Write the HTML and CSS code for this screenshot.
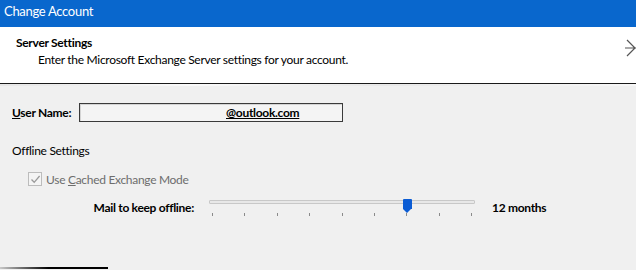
FILE: index.html
```html
<!doctype html>
<html>
<head>
  <link rel="stylesheet" href="styles.css">
</head>
<body>
  <div class="titlebar">Change Account</div>
  <div class="header">
    <div class="header-title">Server Settings</div>
    <div class="header-sub">Enter the Microsoft Exchange Server settings for your account.</div>
    <svg class="next-icon" width="12" height="20" viewBox="0 0 12 20">
      <path d="M3 2 L11 10 L3 18 M1 10 H12" fill="none" stroke="#555" stroke-width="1.2"/>
    </svg>
  </div>
  <div class="header-shadow"></div>
  <div class="content">
    <div class="user-row">
      <span class="label-bold user-label"><u>U</u>ser Name:</span>
      <div class="textbox"><span class="domain">@outlook.com</span></div>
    </div>
    <div class="section-title">Offline Settings</div>
    <div class="check-row">
      <span class="checkbox">
        <svg width="11" height="11" viewBox="0 0 11 11">
          <path d="M1.5 5.5 L4.2 8.3 L9.6 2" fill="none" stroke="#9a9a9a" stroke-width="1.3"/>
        </svg>
      </span>
      <span class="disabled-text">Use <u>C</u>ached Exchange Mode</span>
    </div>
    <div class="slider-row">
      <span class="label-bold slider-label">Mail to keep offline:</span>
      <div class="slider">
        <div class="track"></div>
        <div class="thumb"></div>
        <div class="ticks">
          <i></i><i></i><i></i><i></i><i></i><i></i><i></i><i></i><i></i>
        </div>
      </div>
      <span class="label-bold months">12 months</span>
    </div>
  </div>
  <div class="bottom-line"></div>
</body>
</html>
```

FILE: styles.css
```css
body {
  margin: 0;
  width: 636px;
  height: 270px;
  overflow: hidden;
  position: relative;
  background-color: #f0f0f0;
  font-family: Lato, "Open Sans", sans-serif;
  font-size: 12px;
  letter-spacing: -0.3px;
  color: #000;
}
.titlebar {
  height: 27px;
  background-color: #0967cd;
  color: #fff;
  font-size: 13px;
  line-height: 23px;
  padding-left: 4px;
}
.header {
  position: relative;
  height: 56px;
  background-color: #fff;
  border-bottom: 1px solid #1a1a1a;
}
.header-title {
  font-weight: bold;
  padding: 8px 0 0 16px;
  line-height: 16px;
}
.header-sub {
  padding: 1px 0 0 38px;
  line-height: 16px;
}
.next-icon {
  position: absolute;
  right: 0;
  top: 11px;
}
.header-shadow {
  height: 2px;
  background: linear-gradient(to right, #e6e6e6, #fafafa 30%, #e8e8e8 60%, #f7f7f7);
}
.content {
  padding: 17px 0 0 12px;
}
.label-bold {
  font-weight: bold;
}
.user-row {
  display: flex;
  align-items: center;
  height: 19px;
}
.user-label {
  width: 67px;
}
.textbox {
  width: 262px;
  height: 17px;
  border: 1px solid #3a3a3a;
  box-shadow: inset 1px 1px 0 #d4d4d4;
  background-color: #f4f4f4;
  line-height: 17px;
}
.domain {
  display: inline-block;
  margin-left: 146px;
  font-weight: bold;
  text-decoration: underline;
}
.section-title {
  margin-top: 21px;
  line-height: 16px;
}
.check-row {
  display: flex;
  align-items: center;
  gap: 4px;
  margin: 12px 0 0 16px;
  height: 16px;
}
.checkbox {
  width: 12px;
  height: 12px;
  border: 1px solid #bcbcbc;
  background-color: #f4f4f4;
  display: flex;
  align-items: center;
  justify-content: center;
}
.disabled-text {
  color: #6d6d6d;
}
.slider-row {
  display: flex;
  align-items: flex-start;
  margin-top: 12px;
  height: 24px;
}
.slider-label {
  width: 182px;
  text-align: right;
  line-height: 16px;
  padding-top: 1px;
}
.slider {
  position: relative;
  width: 266px;
  height: 24px;
  margin-left: 15px;
}
.track {
  margin-top: 1px;
  height: 2px;
  border: 1px solid #c8c8c8;
  background-color: #e8e8e8;
  border-radius: 1px;
}
.thumb {
  position: absolute;
  left: 194px;
  top: 0;
  width: 9px;
  height: 10px;
  background-color: #0b5cd4;
  border-radius: 1px 1px 0 0;
}
.thumb::after {
  content: "";
  position: absolute;
  left: 0;
  top: 10px;
  border-left: 4.5px solid transparent;
  border-right: 4.5px solid transparent;
  border-top: 4px solid #0b5cd4;
}
.ticks {
  display: flex;
  justify-content: space-between;
  padding: 0 3px;
  margin-top: 9px;
}
.ticks i {
  width: 1px;
  height: 3px;
  background-color: #8a8a8a;
}
.months {
  margin-left: 17px;
  line-height: 16px;
  padding-top: 1px;
}
.bottom-line {
  position: absolute;
  left: 0;
  bottom: 1px;
  width: 108px;
  height: 2px;
  background: linear-gradient(to right, #c8c8c8, #000 45%);
}
```
